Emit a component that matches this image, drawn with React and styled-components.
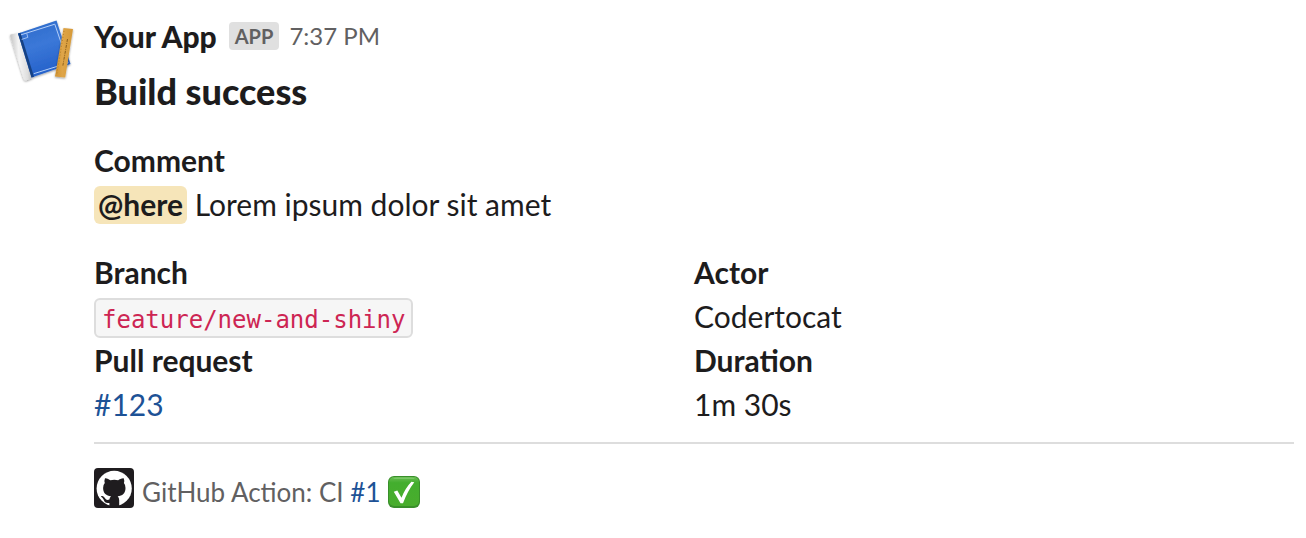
import React from "react";
import styled, { createGlobalStyle } from "styled-components";

const GlobalStyle = createGlobalStyle`
  * {
    box-sizing: border-box;
  }
  body {
    margin: 0;
    background: #ffffff;
    color: #1d1c1d;
    font-family: Lato, "Liberation Sans", sans-serif;
    font-size: 30px;
    line-height: 44px;
    font-variant-ligatures: common-ligatures;
  }
`;

const Message = styled.article`
  display: flex;
  gap: 16px;
  padding: 14px 12px 24px 6px;
`;

const Avatar = styled.svg`
  flex: none;
  display: block;
  width: 72px;
  height: 72px;
`;

const Content = styled.div`
  flex: 1;
  min-width: 0;
`;

const Header = styled.header`
  display: flex;
  align-items: center;
  height: 44px;
`;

const Sender = styled.span`
  font-family: "Lato Black", "Lato Heavy", Lato, sans-serif;
  font-weight: 900;
  margin-right: 12px;
`;

const AppBadge = styled.span`
  display: block;
  height: 28px;
  padding: 0 6px;
  margin-right: 10px;
  border-radius: 4px;
  background: #e0e0e0;
  color: #616061;
  font-size: 20px;
  font-weight: 700;
  line-height: 28px;
`;

const Time = styled.time`
  color: #616061;
  font-size: 24px;
`;

const Title = styled.h1`
  margin: 6px 0 20px;
  font-family: "Lato Black", "Lato Heavy", Lato, sans-serif;
  font-size: 36px;
  line-height: 54px;
  font-weight: 900;
`;

const Paragraph = styled.section`
  margin-bottom: 24px;
`;

const Label = styled.div`
  font-weight: 700;
`;

const Mention = styled.span`
  padding: 0 4px 2px;
  border-radius: 6px;
  background: #f6e5b9;
  font-weight: 700;
`;

const Fields = styled.section`
  display: grid;
  grid-template-columns: 1fr 1fr;
`;

const Value = styled.div`
  height: 44px;
`;

const Code = styled.code`
  display: inline-block;
  height: 40px;
  margin-top: 4px;
  padding: 2px 6px;
  border: 2px solid #dddddd;
  border-radius: 6px;
  background: #f6f6f6;
  color: #cd2553;
  font-family: "DejaVu Sans Mono", monospace;
  font-size: 24px;
  line-height: 36px;
  vertical-align: top;
`;

const Link = styled.a`
  color: #1d5296;
  text-decoration: none;
`;

const Rule = styled.hr`
  height: 2px;
  margin: 16px 0 24px;
  border: 0;
  background: #dddddd;
`;

const Context = styled.footer`
  display: flex;
  align-items: flex-end;
  gap: 8px;
  color: #616061;
  font-size: 26px;
  line-height: 32px;
`;

const Icon = styled.svg`
  display: block;
  flex: none;
  width: ${(p) => p.$size}px;
  height: ${(p) => p.$size}px;
`;

const Field = ({ label, children }) => (
  <div>
    <Label>{label}</Label>
    <Value>{children}</Value>
  </div>
);

const AppAvatar = () => (
  <Avatar viewBox="0 -2 72 72" role="img" aria-label="Your App">
    <defs>
      <linearGradient id="cover" x1="0" y1="0" x2="0.3" y2="1">
        <stop offset="0" stopColor="#2c69c8" />
        <stop offset="0.5" stopColor="#3b78d8" />
        <stop offset="1" stopColor="#2561ca" />
      </linearGradient>
      <linearGradient id="spine" x1="0" y1="0.1" x2="1" y2="0">
        <stop offset="0" stopColor="#c4c4c4" />
        <stop offset="0.35" stopColor="#f4f4f4" />
        <stop offset="0.7" stopColor="#dedede" />
        <stop offset="1" stopColor="#a9a9a9" />
      </linearGradient>
      <linearGradient id="ruler" x1="0" y1="0" x2="1" y2="0">
        <stop offset="0" stopColor="#d0922f" />
        <stop offset="0.4" stopColor="#dfa548" />
        <stop offset="1" stopColor="#d69a38" />
      </linearGradient>
      <filter id="shade" x="-20%" y="-20%" width="140%" height="140%">
        <feDropShadow dx="0" dy="1" stdDeviation="1" floodOpacity="0.4" />
      </filter>
    </defs>
    <g filter="url(#shade)">
      <path d="M4.5 18.5 12 17 26.5 62 20 64.5Q18 64.5 17.3 62L4.2 20Z" fill="url(#spine)" />
      <path d="M12 17.5 50.5 4.5 64.5 48 25.5 61.5Z" fill="url(#cover)" />
      <path d="M12 17.5 14.5 16.7 28 60.7 25.5 61.5Z" fill="#174284" />
    </g>
    <path d="M15 18.8 48.8 8.2 62 47 27.7 57.7" fill="none" stroke="#b4cff8" strokeWidth="1" />
    <path d="M15.7 23.4 21.8 21.4 20.7 17.2" fill="none" stroke="#9fc0f2" strokeWidth="1" />
    <g filter="url(#shade)">
      <path d="M57.5 12 67 13 59.2 61.5 49 60.5Z" fill="url(#ruler)" />
    </g>
    <path d="M58 15 50.8 58" fill="none" stroke="#b67e28" strokeWidth="1" strokeDasharray="1 2" />
    <path d="M61.5 23 56.8 50" fill="none" stroke="#8e611d" strokeWidth="1" strokeDasharray="3 1 1 1" />
  </Avatar>
);

const GitHubIcon = () => (
  <Icon $size={40} viewBox="0 0 40 40" role="img" aria-label="GitHub">
    <rect width="40" height="40" rx="4" fill="#1f1c1f" />
    <circle cx="20.2" cy="20.4" r="17.6" fill="#ffffff" />
    <path
      fill="#1f1c1f"
      d="M11 10.2C13 10 15.2 11.4 16.4 12.2Q20.3 11.3 24.2 12.2C25.5 11.3 27.8 10 29.7 10.2Q30.7 12.6 29.9 15.1Q31.6 17.1 31.5 20C31.4 25.6 28.4 27.7 23.7 28.3Q25.2 29.6 25.2 32.2V38.5H15.4V34.9C11.8 35.6 10.6 34 9.8 32C9.2 30.5 8.4 29.5 7.4 28.9C6.5 28.2 7.4 27.9 8.2 28.1C9.4 28.3 10.2 29.1 10.8 30.1C12 32.1 13.5 32.3 15.4 31.6Q15.6 29.4 17 28.3C12.3 27.7 9.2 25.5 9.1 20Q9 17 10.8 15.1Q10 12.6 11 10.2Z"
    />
  </Icon>
);

const CheckIcon = () => (
  <Icon $size={32} viewBox="0 0 32 32" role="img" aria-label="Success">
    <defs>
      <linearGradient id="check" x1="0" y1="0" x2="0" y2="1">
        <stop offset="0" stopColor="#68bd51" />
        <stop offset="0.2" stopColor="#43ae2e" />
        <stop offset="1" stopColor="#49ad2d" />
      </linearGradient>
    </defs>
    <rect width="32" height="32" rx="6" fill="#398f2a" />
    <rect x="1" y="1" width="30" height="29" rx="5" fill="url(#check)" />
    <path d="M5 3Q6 1.5 9 1.5H23Q26 1.5 27 3Z" fill="#8bd17a" opacity="0.6" />
    <path d="M5.8 15.8 9.3 14.5 13.5 21.8Q17 12.5 23.4 5.8L26.3 6.2Q19.5 15 15 27.2L12.5 27.3Z" fill="#ffffff" />
  </Icon>
);

export default function App() {
  return (
    <>
      <GlobalStyle />
      <Message>
        <AppAvatar />
        <Content>
          <Header>
            <Sender>Your App</Sender>
            <AppBadge>APP</AppBadge>
            <Time dateTime="19:37">7:37 PM</Time>
          </Header>
          <Title>Build success</Title>
          <Paragraph>
            <Label>Comment</Label>
            <div>
              <Mention>@here</Mention> Lorem ipsum dolor sit amet
            </div>
          </Paragraph>
          <Fields>
            <Field label="Branch">
              <Code>feature/new-and-shiny</Code>
            </Field>
            <Field label="Actor">Codertocat</Field>
            <Field label="Pull request">
              <Link href="#123">#123</Link>
            </Field>
            <Field label="Duration">1m 30s</Field>
          </Fields>
          <Rule />
          <Context>
            <GitHubIcon />
            <span>
              GitHub Action: CI <Link href="#1">#1</Link>
            </span>
            <CheckIcon />
          </Context>
        </Content>
      </Message>
    </>
  );
}
